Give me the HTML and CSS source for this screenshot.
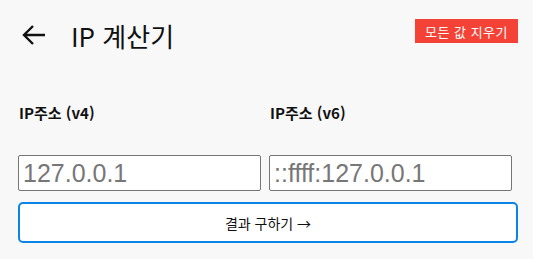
FILE: index.html
```html
<!DOCTYPE html>
<html lang="ko">
<head>
  <meta charset="UTF-8">
  <title>IP 계산기</title>
  <link rel="stylesheet" href="styles.css">
</head>
<body>
  <div class="page">
    <div class="header">
      <span class="back">
        <svg width="24" height="20" viewBox="0 0 24 20">
          <path d="M23 10H2M11 1L2 10l9 9" fill="none" stroke="#111" stroke-width="2.4"/>
        </svg>
      </span>
      <h1 class="title">IP 계산기</h1>
      <button class="clear-btn">모든 값 지우기</button>
    </div>

    <div class="fields">
      <div class="field">
        <label class="label">IP주소 (v4)</label>
        <input type="text" class="ip-input" placeholder="127.0.0.1">
      </div>
      <div class="field">
        <label class="label">IP주소 (v6)</label>
        <input type="text" class="ip-input" placeholder="::ffff:127.0.0.1">
      </div>
    </div>

    <button class="calc-btn">결과 구하기 →</button>
  </div>
</body>
</html>
```

FILE: styles.css
```css
body {
  margin: 0;
  background-color: #f8f8f8;
  font-family: "Noto Sans CJK KR", "Noto Sans", sans-serif;
  color: #111;
}

.page {
  width: 500px;
  padding: 19px 0 0 18px;
}

.header {
  display: flex;
  align-items: flex-start;
  height: 83px;
}

.back {
  display: flex;
  margin: 6px 0 0 4px;
}

.title {
  margin: 0 0 0 25px;
  font-size: 26px;
  font-weight: normal;
  line-height: 34px;
}

.clear-btn {
  margin-left: auto;
  background-color: #f44336;
  color: white;
  border: none;
  height: 24px;
  width: 103px;
  padding: 0;
  font-family: "Noto Sans CJK KR", sans-serif;
  font-size: 13px;
  letter-spacing: 0.5px;
}

.fields {
  display: grid;
  grid-template-columns: 243px 243px;
  gap: 8px;
}

.field {
  display: flex;
  flex-direction: column;
}

.label {
  font-size: 15px;
  font-weight: bold;
  line-height: 22px;
  height: 53px;
  padding-left: 1px;
}

.ip-input {
  box-sizing: border-box;
  width: 243px;
  height: 36px;
  border: 1px solid #767676;
  border-radius: 2px;
  background: white;
  padding: 0 4px;
  font-family: "Liberation Sans", Arial, sans-serif;
  font-size: 25px;
  outline: none;
}

.ip-input::placeholder {
  color: #777;
}

.calc-btn {
  display: block;
  box-sizing: border-box;
  width: 500px;
  height: 41px;
  margin-top: 11px;
  border: 2px solid #0a84e6;
  border-radius: 5px;
  background: white;
  color: #111;
  font-family: "Noto Sans CJK KR", sans-serif;
  font-size: 14px;
}
```
